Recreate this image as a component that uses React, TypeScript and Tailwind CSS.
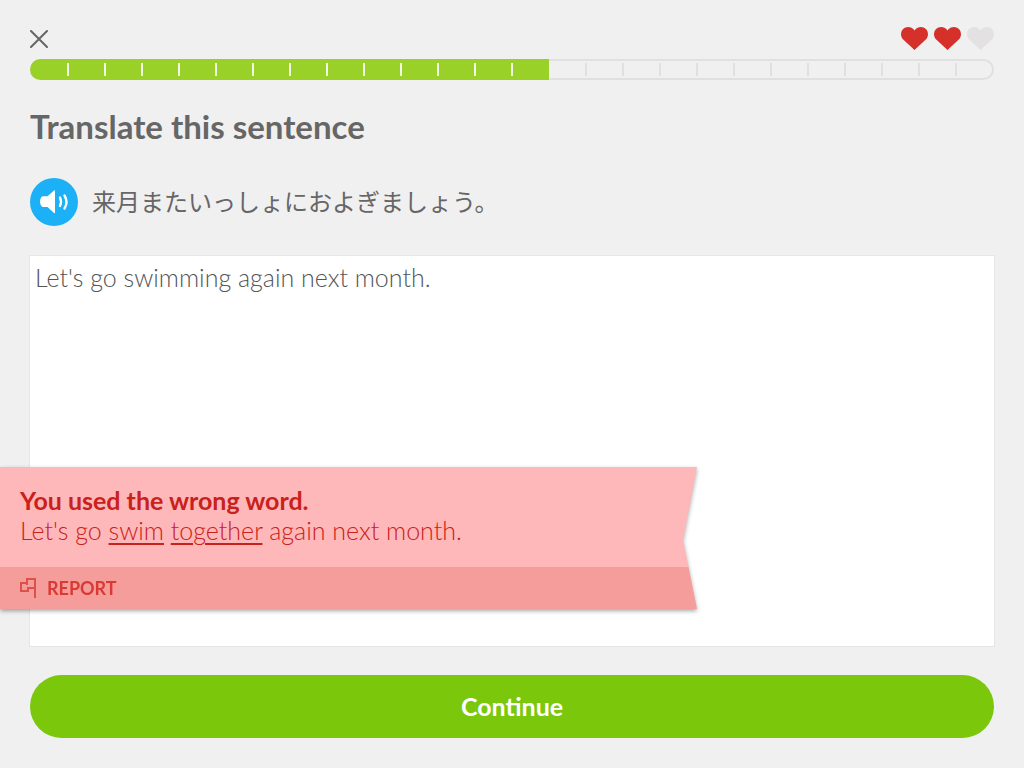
import React, { useState } from "react";

const TOTAL_STEPS = 26;
const DONE_STEPS = 14;

function Heart({ filled }: { filled: boolean }) {
  return (
    <svg
      viewBox="0 0 27 23"
      className={filled ? "h-[23px] w-[27px] fill-[#d6302a]" : "h-[23px] w-[27px] fill-[#e3e1e2]"}
      aria-hidden="true"
    >
      <path d="M13.5 23 2.2 12.6C-.6 9.8-.7 5.2 1.9 2.3 4.8-.7 9.5-.7 12.3 2.1L13.5 3.5 14.7 2.1C17.5-.7 22.2-.7 25.1 2.3 27.7 5.2 27.6 9.8 24.8 12.6Z" />
    </svg>
  );
}

function ProgressBar() {
  const steps = Array.from({ length: TOTAL_STEPS }, (_, i) => i + 1);
  return (
    <div
      role="progressbar"
      aria-label="Lesson progress"
      aria-valuenow={DONE_STEPS}
      aria-valuemax={TOTAL_STEPS}
      className="relative h-[21px] overflow-hidden rounded-full inset-ring-2 inset-ring-[#e0e0e0]"
    >
      <div
        className="absolute inset-y-0 left-0 bg-[#9ad128]"
        style={{ width: `${(DONE_STEPS / TOTAL_STEPS) * 100}%` }}
      />
      <div className="relative grid h-full grid-cols-[repeat(26,minmax(0,1fr))] items-center pl-0.5">
        {steps.map((step) => (
          <div
            key={step}
            className={
              step < DONE_STEPS
                ? "h-[13px] border-r-2 border-[#f3f7e6]"
                : step === DONE_STEPS || step === TOTAL_STEPS
                  ? "h-[13px]"
                  : "h-[13px] border-r-2 border-[#e0e0e0]"
            }
          />
        ))}
      </div>
    </div>
  );
}

function SpeakerButton() {
  return (
    <button type="button" aria-label="Play sentence" className="size-12 shrink-0 rounded-full bg-[#1cb0f6]">
      <svg viewBox="0 0 48 48" className="size-12" aria-hidden="true">
        <path
          fill="#fff"
          d="M12.5 18.3H17.5L24 12.4Q25 11.7 25 13V34.5Q25 35.7 24 35L17.5 29H12.5C9.3 27.5 9.3 19.8 12.5 18.3Z"
        />
        <path
          fill="none"
          stroke="#fff"
          strokeWidth="2.4"
          strokeLinecap="round"
          d="M30 19.5Q32 23.7 30 28M34.5 17.5Q38.5 24 34.5 30.5"
        />
      </svg>
    </button>
  );
}

function Feedback() {
  return (
    <div
      role="status"
      className="absolute -left-[30px] bottom-[37px] w-[72.3%] min-w-[500px] text-[#c9211c] drop-shadow-[0_2px_2px_rgba(0,0,0,0.35)]"
    >
      <div className="[clip-path:polygon(0_0,100%_0,98%_51%,100%_100%,0_100%)]">
        <div className="bg-[#ffb8b9] px-5 pt-[18px] pb-[22px] text-[25px] leading-[30px]">
          <p className="font-bold">You used the wrong word.</p>
          <p className="font-light">
            Let's go <u className="decoration-2 underline-offset-3">swim</u>{" "}
            <u className="decoration-2 underline-offset-3">together</u> again next month.
          </p>
        </div>
        <div className="flex h-[42px] items-center bg-[#f59d9a] px-5">
          <button type="button" className="flex items-center gap-2.5 text-lg font-bold text-[#d93a33]">
            <svg viewBox="0 0 17 20" className="h-5 w-[17px]" aria-hidden="true">
              <path
                fill="none"
                stroke="#de514b"
                strokeWidth="2"
                d="M15 20V1H7V5H1V13H8V10H15M7 5V7"
              />
            </svg>
            REPORT
          </button>
        </div>
      </div>
    </div>
  );
}

export default function App() {
  const [answer, setAnswer] = useState("Let's go swimming again next month.");

  return (
    <main className="flex min-h-screen flex-col overflow-hidden bg-[#f0f0f0] px-[30px] pt-[26px] pb-[30px] font-['Lato','Noto_Sans_CJK_JP',sans-serif] text-[#666]">
      <header>
        <div className="mb-2 flex h-[25px] items-center justify-between">
          <button type="button" aria-label="Quit lesson">
            <svg viewBox="0 0 18 18" className="size-[18px]" aria-hidden="true">
              <path d="M1 1 17 17M17 1 1 17" stroke="#666" strokeWidth="2" strokeLinecap="round" />
            </svg>
          </button>
          <div className="flex gap-1.5" role="img" aria-label="2 of 3 hearts left">
            <Heart filled />
            <Heart filled />
            <Heart filled={false} />
          </div>
        </div>
        <ProgressBar />
      </header>

      <h1 className="mt-[26px] text-[33px] leading-10 font-bold">Translate this sentence</h1>

      <div className="mt-8 flex items-center gap-3.5">
        <SpeakerButton />
        <p lang="ja" className="pb-0.5 font-['Noto_Sans_CJK_JP',sans-serif] text-2xl leading-8 font-normal">
          来月またいっしょにおよぎましょう。
        </p>
      </div>

      <div className="relative mt-[30px] flex flex-1">
        <textarea
          aria-label="Your translation"
          value={answer}
          onChange={(e) => setAnswer(e.target.value)}
          className="w-full flex-1 resize-none bg-white px-[5px] py-1.5 text-[25px] leading-[30px] font-light text-[#555] ring-1 ring-[#e6e6e6] outline-none"
        />
        <Feedback />
      </div>

      <button type="button" className="mt-[29px] h-[63px] w-full shrink-0 rounded-full bg-[#7ac70c] text-[25px] font-bold text-white">
        Continue
      </button>
    </main>
  );
}
